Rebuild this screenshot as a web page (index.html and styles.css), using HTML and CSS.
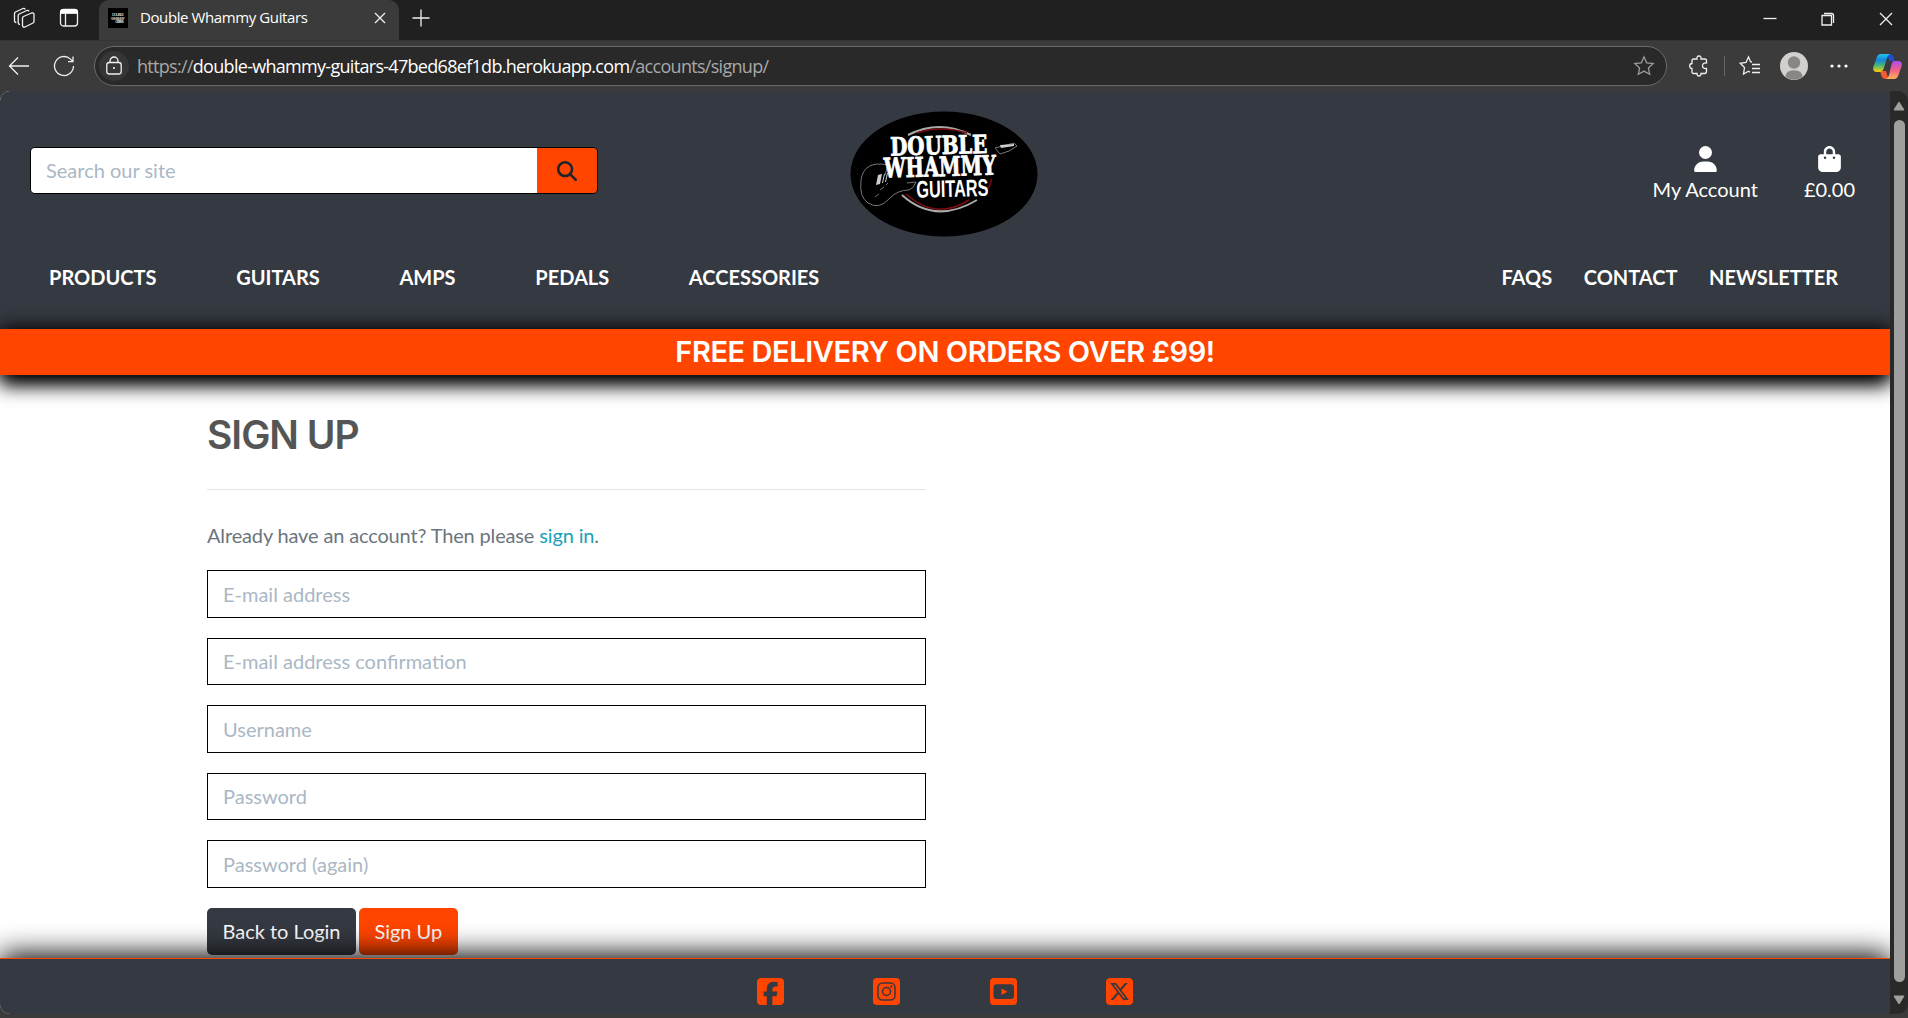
FILE: index.html
```html
<!DOCTYPE html>
<html lang="en">
<head>
<meta charset="utf-8">
<title>Double Whammy Guitars</title>
<link rel="stylesheet" href="styles.css">
</head>
<body>
<div class="titlebar">
  <svg class="workspaces" width="24" height="24" viewBox="0 0 24 24"><path d="M10.500 12q0-1 1-1.500l8-3.500q2.500-.5 2.500 1.500v7q0 1-1 1.500l-8 4q-2.500.5-2.500-1.500zM8 18.500q-1.800 0-1.800-1.800V9.500q0-1 1-1.500l7.500-3.500q1.500-.5 2.300.8M4.300 16.500q-1.800 0-1.800-1.800V7.500q0-1 1-1.500L11 2.500q1.500-.5 2.300.8"/></svg>
  <svg class="tabs-icon" width="20" height="20" viewBox="0 0 20 20"><rect x="1.500" y="1.500" width="17" height="16.500" rx="3"/><path d="M6.500 5v13M2 5h16"/><path class="solid" d="M1 5.500V4q0-3 3-3h12q3 0 3 3v1.500z"/></svg>
  <div class="tab">
    <svg class="favicon" width="20" height="20" viewBox="0 0 20 20"><rect width="20" height="20"/><text x="4" y="7.500" textLength="12">DOUBLE</text><text x="3" y="11.500" textLength="14">WHAMMY</text><text x="7" y="15" textLength="9">GUITARS</text></svg>
    <span class="tab-title">Double Whammy Guitars</span>
    <svg class="tab-close" width="12" height="12" viewBox="0 0 12 12"><path d="M1 1l10 10M11 1L1 11"/></svg>
  </div>
  <svg class="new-tab" width="18" height="18" viewBox="0 0 18 18"><path d="M9 .5v17M.5 9h17"/></svg>
  <div class="window-buttons">
    <svg width="14" height="14" viewBox="0 0 14 14"><path d="M.5 6.500h13"/></svg>
    <svg width="14" height="14" viewBox="0 0 14 14"><path d="M1 3.500h9.500V13H1zM3 1.500h7.500q2 0 2 2V11"/></svg>
    <svg width="14" height="14" viewBox="0 0 14 14"><path d="M1 1l12 12M13 1L1 13"/></svg>
  </div>
</div>
<div class="toolbar">
  <svg class="back" width="22" height="20" viewBox="0 0 22 20"><path d="M10 1.500L1.500 10l8.500 8.500M1.500 10H21"/></svg>
  <svg class="reload" width="22" height="22" viewBox="0 0 22 22"><path d="M20.500 11a9.500 9.500 0 1 1-3-6.900l2.500 2.400M20 1.500v5.200h-5"/></svg>
  <div class="address">
    <span class="site-info"><svg width="18" height="20" viewBox="0 0 18 20"><rect x="1.800" y="6.500" width="14.400" height="11.500" rx="2.500"/><path d="M5 6.500V5a4 4 0 0 1 8 0v1.500"/><circle class="solid" cx="9" cy="12" r="1"/></svg></span>
    <span class="url">https://<b>double-whammy-guitars-47bed68ef1db.herokuapp.com</b>/accounts/signup/</span>
    <svg class="favorite" width="22" height="22" viewBox="0 0 22 22"><path d="M11 1.800l2.700 6 6.500.7-4.800 4.400 1.300 6.400L11 16.100l-5.700 3.200 1.300-6.400-4.800-4.400 6.500-.7z"/></svg>
  </div>
  <svg class="extensions" width="20" height="22" viewBox="0 0 20 22"><path d="M4.500 4H8q-.5-3 2-3t2 3h4q1.500 0 1.500 1.500V8q-4-.3-4 2.800t4 2.700v3q0 2-2 2h-3.500q0 2.500-2 2.500T8 18.500H4.500q-1.500 0-1.500-1.500v-3.500q-2.300 0-2.300-2.500T3 8.500v-3Q3 4 4.500 4z"/></svg>
  <span class="divider"></span>
  <svg class="favorites" width="22" height="22" viewBox="0 0 22 22"><path d="M13 7l-1.500-.3L9.500 1.800 7 7.500l-5.800.8 4.300 4.200-1 6.500 5-2.700 1.500 1M13 9.500h8M13 13.500h8M13 17.500h8" /></svg>
  <svg class="profile" width="28" height="28" viewBox="0 0 28 28"><circle cx="14" cy="14" r="14" fill="#d2d0ce"/><g fill="#8a8683"><circle cx="14" cy="10.500" r="6.200"/><path d="M5.500 25q0-6.800 8.500-6.800T22.500 25Q14 30.500 5.500 25z"/></g></svg>
  <svg class="more" width="18" height="6" viewBox="0 0 18 6"><circle cx="2" cy="3" r="1.600"/><circle cx="9" cy="3" r="1.600"/><circle cx="16" cy="3" r="1.600"/></svg>
  <svg class="copilot" width="29" height="27" viewBox="0 0 29 27">
    <defs>
      <linearGradient id="cool" x2="0" y2="1"><stop stop-color="#1fc3e8"/><stop offset=".35" stop-color="#1685d9"/><stop offset=".65" stop-color="#4fb872"/><stop offset="1" stop-color="#ffd000"/></linearGradient>
      <linearGradient id="warm" x2="0" y2="1"><stop stop-color="#a650ee"/><stop offset=".5" stop-color="#f45f86"/><stop offset="1" stop-color="#ffb35a"/></linearGradient>
    </defs>
    <path fill="#1c4fd6" d="M14 1h2.500q3 0 4 3.500l1 3.500h-5z"/>
    <path fill="#f25b32" d="M7 18l1.500 5q1 3 4 3h3L13 18z"/>
    <path fill="url(#cool)" d="M8 1h9q-2 .8-3 4l-3.500 11q-1 3-4 3H4q-5 0-3.500-5.500L3.500 5Q4.800 1 8 1z"/>
    <path fill="url(#warm)" d="M21 8h4q5 0 3.500 5.500L25.500 22q-1.300 4-4.500 4h-8q2-.8 3-4l2.500-10.500Q19.300 8 21 8z"/>
  </svg>
</div>
<div class="viewport">
  <div class="page">
    <header>
      <div class="header-top">
        <form class="search">
          <input type="text" placeholder="Search our site">
          <button type="button"><svg width="20" height="20" viewBox="0 0 512 512"><path d="M416 208c0 45.900-14.900 88.300-40 122.700L502.600 457.400c12.500 12.500 12.500 32.800 0 45.300s-32.800 12.500-45.300 0L330.700 376c-34.400 25.200-76.800 40-122.700 40C93.100 416 0 322.900 0 208S93.100 0 208 0S416 93.100 416 208zM208 352a144 144 0 1 0 0-288 144 144 0 1 0 0 288z"/></svg></button>
        </form>
        <svg class="logo" width="188" height="126" viewBox="0 0 188 126">
          <ellipse cx="94" cy="63" rx="93.500" ry="62.500"/>
          <path class="ring" d="M58 24q31-16 63 0M52 84q33 30 75 5"/>
          <path class="ring-red" d="M67 22q24-8 50 0M56 83q30 27 63 6M141 68q1 4-3 9"/>
          <path class="guitar" d="M38 54q-24-5-27 15-2 17 7 23 11 7 21-4 8-9 20-9 5-2 7-8l-9 1M38 54l-3 10M25 86l4-3M30 79l4-3M36 74l2-2M145 37l19-5 3 3-8 5-9 3z"/>
          <path class="pickup" d="M28 64l4-1-2 10-4 1zM34 63l1 0-2 9-1 0zM37 62l1 0-2 9-1 0zM150 34l14-1v2l-13 2z"/>
          <g transform="rotate(-1.500 94 63)">
            <text class="slab" x="41" y="43" font-size="25" textLength="97" lengthAdjust="spacingAndGlyphs">DOUBLE</text>
            <text class="slab" x="34" y="65" font-size="27" textLength="112" lengthAdjust="spacingAndGlyphs">WHAMMY</text>
            <text class="sans" x="66" y="86" font-size="24" textLength="72" lengthAdjust="spacingAndGlyphs">GUITARS</text>
          </g>
        </svg>
        <div class="account">
          <a><svg width="23" height="26" viewBox="0 0 448 512"><path d="M224 256A128 128 0 1 0 224 0a128 128 0 1 0 0 256zm-45.700 48C79.800 304 0 383.800 0 482.300C0 498.700 13.300 512 29.700 512H418.300c16.400 0 29.700-13.300 29.700-29.700C448 383.800 368.200 304 269.700 304H178.300z"/></svg>My Account</a>
          <a><svg width="23" height="26" viewBox="0 0 448 512"><path d="M160 112c0-35.300 28.700-64 64-64s64 28.700 64 64v48H160V112zm-48 48H48c-26.500 0-48 21.500-48 48V416c0 53 43 96 96 96H352c53 0 96-43 96-96V208c0-26.500-21.500-48-48-48H336V112C336 50.100 285.900 0 224 0S112 50.100 112 112v48zm24 48a24 24 0 1 1 0 48 24 24 0 1 1 0-48zm152 24a24 24 0 1 1 48 0 24 24 0 1 1 -48 0z"/></svg>£0.00</a>
        </div>
      </div>
      <nav>
        <div class="nav-main"><a>PRODUCTS</a><a>GUITARS</a><a>AMPS</a><a>PEDALS</a><a>ACCESSORIES</a></div>
        <div class="nav-side"><a>FAQS</a><a>CONTACT</a><a>NEWSLETTER</a></div>
      </nav>
    </header>
    <div class="banner"><h4>FREE DELIVERY ON ORDERS OVER £99!</h4></div>
    <main>
      <h2>SIGN UP</h2>
      <hr>
      <p>Already have an account? Then please <a>sign in</a>.</p>
      <form class="signup">
        <input type="email" placeholder="E-mail address">
        <input type="email" placeholder="E-mail address confirmation">
        <input type="text" placeholder="Username">
        <input type="password" placeholder="Password">
        <input type="password" placeholder="Password (again)">
        <div class="actions"><a class="btn dark">Back to Login</a><a class="btn orange">Sign Up</a></div>
      </form>
    </main>
    <footer>
      <svg width="27" height="27" viewBox="0 32 448 448"><path d="M64 32C28.700 32 0 60.700 0 96V416c0 35.300 28.700 64 64 64h98.200V334.200H109.400V256h52.800V222.300c0-87.100 39.400-127.500 125-127.500c16.200 0 44.200 3.200 55.700 6.400V172c-6-.6-16.500-1-29.600-1c-42 0-58.200 15.900-58.200 57.200V256h83.600l-14.400 78.200H255V480H384c35.300 0 64-28.700 64-64V96c0-35.300-28.700-64-64-64H64z"/></svg>
      <svg width="27" height="27" viewBox="0 0 27 27"><rect width="27" height="27" rx="3.800"/><g class="cut-line"><rect x="5" y="5" width="17" height="17" rx="4.500"/><circle cx="13.500" cy="13.500" r="4"/></g><circle class="cut" cx="18.300" cy="8.700" r="1.100"/></svg>
      <svg width="27" height="27" viewBox="0 0 27 27"><rect width="27" height="27" rx="3.800"/><rect class="cut" x="3.500" y="6.200" width="20.500" height="14.800" rx="3"/><path d="M11.500 10.500l6 3.200-6 3.200z"/></svg>
      <svg width="27" height="27" viewBox="0 32 448 448"><path d="M64 32C28.700 32 0 60.700 0 96V416c0 35.300 28.700 64 64 64H384c35.300 0 64-28.700 64-64V96c0-35.300-28.700-64-64-64H64zm297.100 84L257.300 234.600 379.400 396H283.800L209 298.100 123.300 396H75.800l111-126.900L69.700 116h98l67.700 89.500L313.600 116h47.500zM323.300 367.600L153.400 142.900H125.100L296.900 367.600h26.300z"/></svg>
    </footer>
  </div>
  <div class="scrollbar">
    <svg width="12" height="10" viewBox="0 0 12 10"><path d="M6 1l5 8H1z"/></svg>
    <div class="thumb"></div>
    <svg width="12" height="10" viewBox="0 0 12 10"><path d="M6 9L1 1h10z"/></svg>
  </div>
</div>
</body>
</html>
```
FILE: styles.css
```css
* { box-sizing: border-box; }
body { margin: 0; width: 1908px; height: 1018px; overflow: hidden; background: #3b3b3b; font-family: Lato, sans-serif; font-size: 20px; line-height: 30px; }
svg { display: block; flex: none; }

/* Browser window */
.titlebar { display: flex; align-items: center; height: 40px; background: #202020; }
.titlebar svg, .toolbar svg { fill: none; stroke: #f0f0f0; stroke-width: 1.300; }
.titlebar .solid, .toolbar .solid { fill: #fff; stroke: none; }
.workspaces { margin: -4px 0 0 12px; }
.tabs-icon { margin: -4px 0 0 23px; }
.tab { display: flex; align-items: center; width: 300px; height: 40px; margin-left: 20px; padding: 0 13px 4px 9px; background: #3b3b3b; border-radius: 10px 10px 0 0; }
.titlebar .favicon { stroke: none; fill: #000; }
.favicon text { fill: #bbb; font: bold 4px "Liberation Sans", sans-serif; }
.tab-title { flex: 1; margin: -2px 0 0 12px; color: #fff; font-family: "Open Sans", sans-serif; font-size: 15px; letter-spacing: -.4px; white-space: nowrap; }
.new-tab { margin: -5px 0 0 13px; }
.window-buttons { display: flex; gap: 44px; margin: -2px 15px 0 auto; }
.toolbar { display: flex; align-items: center; height: 51px; padding-left: 8px; border-top: 1px solid #333; }
.reload { margin-left: 23px; }
.address { display: flex; align-items: center; width: 1573px; height: 40px; margin-left: 19px; padding: 0 11px 0 4px; background: #292929; border: 1px solid #6b6b6b; border-radius: 20px; }
.site-info { display: flex; align-items: center; justify-content: center; width: 30px; height: 30px; background: #363636; border-radius: 50%; }
.url { margin: -1px 0 0 8px; font-family: "Open Sans", sans-serif; font-size: 18px; letter-spacing: -.7px; color: #a8a8a8; white-space: nowrap; }
.url b { font-weight: 400; color: #fff; }
.toolbar .favorite { margin-left: auto; stroke: #999; }
.extensions { margin-left: 22px; }
.divider { width: 1px; height: 20px; margin: 0 15px; background: #666; }
.favorites { margin-left: -1px; }
.toolbar .profile { margin-left: 19px; stroke: none; }
.toolbar .more { margin-left: 22px; fill: #fff; stroke: none; }
.toolbar .copilot { margin-left: 25px; stroke: none; }
.viewport { display: flex; height: 923px; overflow: hidden; border-radius: 10px; background: #292929; }
.scrollbar { display: flex; flex-direction: column; align-items: center; width: 18px; padding: 10px 0 9px; }
.scrollbar svg { fill: #a0a0a0; stroke: #a0a0a0; stroke-linejoin: round; }
.thumb { flex: 1; width: 11px; margin: 9px 0 13px; background: #9f9f9f; border-radius: 6px; }

/* Site */
.page { display: flex; flex-direction: column; width: 1890px; overflow: hidden; background: #fff; }
header { height: 238px; flex: none; background: #353941; }
.header-top { display: grid; grid-template-columns: 1fr 188px 1fr; padding: 20px 35px 0 33px; height: 145px; }
.search { display: flex; width: 568px; height: 47px; margin: 36px 0 0 -3px; border: 1px solid #000; border-radius: 5px; overflow: hidden; }
input { display: block; width: 100%; border: 1px solid #000; border-radius: 0; padding: 0 15px; font: inherit; background: #fff; outline: 0; }
input::placeholder { color: #aab7c4; opacity: 1; }
.search input { flex: 1; border: 0; padding-bottom: 2px; }
.search button { display: flex; align-items: center; justify-content: center; width: 60px; padding: 0; border: 0; background: #ff4500; }
.search button svg { fill: #212529; }
.logo .ring, .logo .ring-red, .logo .guitar { fill: none; stroke: #aaa; stroke-width: 2; }
.logo .ring-red { stroke: #7d0c10; stroke-width: 1.500; }
.logo .guitar { stroke: #777; stroke-width: 1; }
.logo .pickup { fill: #ccc; }
.logo text { fill: #fff; font-weight: bold; }
.logo .slab { font-family: "DejaVu Serif Condensed", "DejaVu Serif", serif; stroke: #fff; stroke-width: .8; }
.logo .sans { font-family: "Liberation Sans", sans-serif; }
.account { display: flex; justify-content: flex-end; gap: 46px; padding-top: 35px; color: #fff; }
.account a { display: flex; flex-direction: column; align-items: center; gap: 2px; }
.account svg { fill: #fff; }
nav { display: flex; justify-content: space-between; padding: 25px 52px 0 49px; font-weight: 700; line-height: 32px; color: #fff; }
.nav-main { display: flex; gap: 79.700px; }
.nav-side { display: flex; gap: 31.500px; }
.banner { position: relative; flex: none; height: 46px; background: #ff4500; box-shadow: 0 10px 20px #000, 0 0 20px #000; text-align: center; }
h2, h4 { margin: 0; font-family: Inter, sans-serif; font-weight: 600; }
h4 { color: #fff; font-size: 29px; line-height: 45px; letter-spacing: -.42px; }
main { flex: 1; min-height: 0; width: 926px; padding: 36px 0 0 207px; }
h2 { color: #555; font-size: 39px; line-height: 48px; letter-spacing: -1px; }
hr { margin: 30px 0; border: 0; border-top: 1px solid #e5e5e5; }
p { margin: 0 0 20px; letter-spacing: -.15px; color: #6c757d; }
p a { color: #17a2b8; }
.signup input { height: 47.500px; margin-bottom: 20px; }
.actions { display: flex; gap: 3px; }
.btn { height: 47px; padding: 0 15.500px; line-height: 46px; letter-spacing: -.03px; color: #fff; border-radius: 5px; }
.dark { background: #353941; }
.orange { background: #ff4500; }
footer { position: relative; flex: none; display: flex; justify-content: center; gap: 89.300px; height: 56px; padding-top: 19px; background: #353941; border-top: 1px solid #ff4500; box-shadow: 0 -4px 28px #000; }
footer svg { fill: #ff4500; }
footer .cut { fill: #353941; }
footer .cut-line { fill: none; stroke: #353941; stroke-width: 1.500; }
```
